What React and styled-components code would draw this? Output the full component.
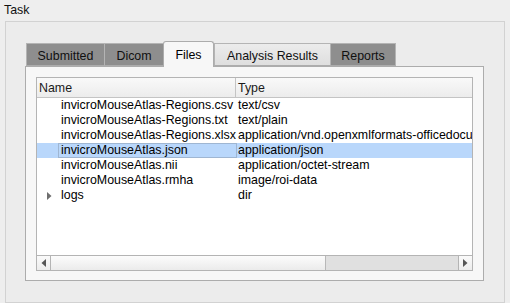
import React from 'react';
import styled, { createGlobalStyle } from 'styled-components';

const files = [
    { name: 'invicroMouseAtlas-Regions.csv', type: 'text/csv' },
    { name: 'invicroMouseAtlas-Regions.txt', type: 'text/plain' },
    { name: 'invicroMouseAtlas-Regions.xlsx', type: 'application/vnd.openxmlformats-officedocument.spreadsheetml.sheet' },
    { name: 'invicroMouseAtlas.json', type: 'application/json', selected: true },
    { name: 'invicroMouseAtlas.nii', type: 'application/octet-stream' },
    { name: 'invicroMouseAtlas.rmha', type: 'image/roi-data' },
    { name: 'logs', type: 'dir', folder: true },
]

const tabs = [
    { label: 'Submitted', width: 79 },
    { label: 'Dicom', width: 60 },
    { label: 'Files', width: 51, active: true },
    { label: 'Analysis Results', width: 117, light: true },
    { label: 'Reports', width: 66 },
]

export default function App() {
    return (
        <>
            <Global />
            <Page>
                <Legend>Task</Legend>
                <Group>
                    <TabRow>
                        {tabs.map((t) => (
                            <Tab key={t.label} $w={t.width} $active={t.active} $light={t.light}>
                                {t.label}
                            </Tab>
                        ))}
                    </TabRow>
                    <Panel>
                        <Table>
                            <Header>
                                <HeadCell $w={199}>Name</HeadCell>
                                <HeadCell $last>Type</HeadCell>
                            </Header>
                            <Body>
                                {files.map((f) => (
                                    <Row key={f.name} $selected={f.selected}>
                                        <NameCell>
                                            <Toggle>
                                                {f.folder && (
                                                    <svg width="5" height="8" viewBox="0 0 5 8">
                                                        <path d="M0 0 L4.5 4 L0 8 Z" fill="#6e6e6e" />
                                                    </svg>
                                                )}
                                            </Toggle>
                                            <Label $selected={f.selected}>{f.name}</Label>
                                        </NameCell>
                                        <TypeCell>{f.type}</TypeCell>
                                    </Row>
                                ))}
                            </Body>
                            <HScroll>
                                <Arrow>
                                    <svg width="5" height="8" viewBox="0 0 5 8">
                                        <path d="M5 0 L0.5 4 L5 8 Z" fill="#555" />
                                    </svg>
                                </Arrow>
                                <Thumb />
                                <Track />
                                <Arrow $right>
                                    <svg width="5" height="8" viewBox="0 0 5 8">
                                        <path d="M0 0 L4.5 4 L0 8 Z" fill="#555" />
                                    </svg>
                                </Arrow>
                            </HScroll>
                        </Table>
                    </Panel>
                </Group>
            </Page>
        </>
    )
}

const Global = createGlobalStyle`
    html, body {
        margin: 0;
        background: #eeeeee;
    }
    body {
        font-family: "Liberation Sans", Arial, sans-serif;
        font-size: 12.4px;
        color: #000;
    }
`

const Page = styled.div`
    width: 510px;
    height: 303px;
    overflow: hidden;
    box-sizing: border-box;
    padding: 3px 0 0 5px;
`

const Legend = styled.div`
    height: 18px;
    line-height: 15px;
    margin-left: -1px;
    color: #111;
`

const Group = styled.div`
    width: 500px;
    height: 282px;
    box-sizing: border-box;
    border: 1px solid #d2d2d2;
    background: #ececec;
    padding: 19px 0 0 19px;
`

const TabRow = styled.div`
    display: flex;
    align-items: flex-end;
    height: 25px;
    margin-left: 1px;
    position: relative;
    z-index: 1;
`

const Tab = styled.div`
    box-sizing: border-box;
    width: ${(p) => p.$w}px;
    height: ${(p) => (p.$active ? 26 : 23)}px;
    margin-bottom: ${(p) => (p.$active ? -1 : 0)}px;
    display: flex;
    align-items: center;
    justify-content: center;
    padding-top: ${(p) => (p.$active ? 0 : 2)}px;
    border: 1px solid ${(p) => (p.$active ? '#acacac' : '#b4b4b4')};
    border-bottom: ${(p) => (p.$active ? 'none' : '1px solid #acacac')};
    border-radius: ${(p) => (p.$active ? '3px 3px 0 0' : '0')};
    background: ${(p) =>
        p.$active ? '#f7f7f7' : p.$light ? 'linear-gradient(#ececec, #dedede)' : '#8e8e8e'};
    color: ${(p) => (p.$active ? '#000' : '#101010')};
    margin-right: ${(p) => (p.$active ? 0 : -1)}px;
`

const Panel = styled.div`
    width: 459px;
    height: 215px;
    box-sizing: border-box;
    border: 1px solid #acacac;
    background: #f7f7f7;
    padding: 10px 0 0 10px;
`

const Table = styled.div`
    width: 437px;
    height: 194px;
    box-sizing: border-box;
    border: 1px solid #b4b4b4;
    background: #fff;
    display: flex;
    flex-direction: column;
    overflow: hidden;
`

const Header = styled.div`
    display: flex;
    height: 19px;
    flex: none;
    border-bottom: 1px solid #c4c4c4;
    background: linear-gradient(#f9f9f9, #ececec);
`

const HeadCell = styled.div`
    box-sizing: border-box;
    width: ${(p) => (p.$w ? p.$w + 'px' : 'auto')};
    flex: ${(p) => (p.$last ? 1 : 'none')};
    border-right: ${(p) => (p.$last ? 'none' : '1px solid #c4c4c4')};
    padding: 3px 0 0 2px;
    line-height: 15px;
    color: #1a1a1a;
`

const Body = styled.div`
    flex: 1;
    display: flex;
    flex-direction: column;
`

const Row = styled.div`
    display: flex;
    height: 15px;
    line-height: 15px;
    background: ${(p) => (p.$selected ? '#b9d7fb' : 'transparent')};
    white-space: nowrap;
`

const NameCell = styled.div`
    display: flex;
    width: 200px;
    flex: none;
`

const Toggle = styled.div`
    width: 21px;
    flex: none;
    display: flex;
    align-items: center;
    padding-left: 10px;
    box-sizing: border-box;
`

const Label = styled.div`
    flex: 1;
    box-sizing: border-box;
    padding-left: 2px;
    border: 1px solid ${(p) => (p.$selected ? '#9fb6d2' : 'transparent')};
    line-height: 13px;
`

const TypeCell = styled.div`
    flex: 1;
    padding-left: 1px;
    overflow: hidden;
`

const HScroll = styled.div`
    display: flex;
    height: 14px;
    flex: none;
    border-top: 1px solid #b4b4b4;
    background: #e0e0e0;
`

const Arrow = styled.div`
    width: 13px;
    flex: none;
    display: flex;
    align-items: center;
    justify-content: center;
    background: linear-gradient(#fafafa, #ececec);
    border-right: ${(p) => (p.$right ? 'none' : '1px solid #b4b4b4')};
    border-left: ${(p) => (p.$right ? '1px solid #b4b4b4' : 'none')};
`

const Thumb = styled.div`
    width: 274px;
    flex: none;
    background: linear-gradient(#fcfcfc, #ebebeb);
    border-right: 1px solid #b8b8b8;
`

const Track = styled.div`
    flex: 1;
    background: #e0e0e0;
`
